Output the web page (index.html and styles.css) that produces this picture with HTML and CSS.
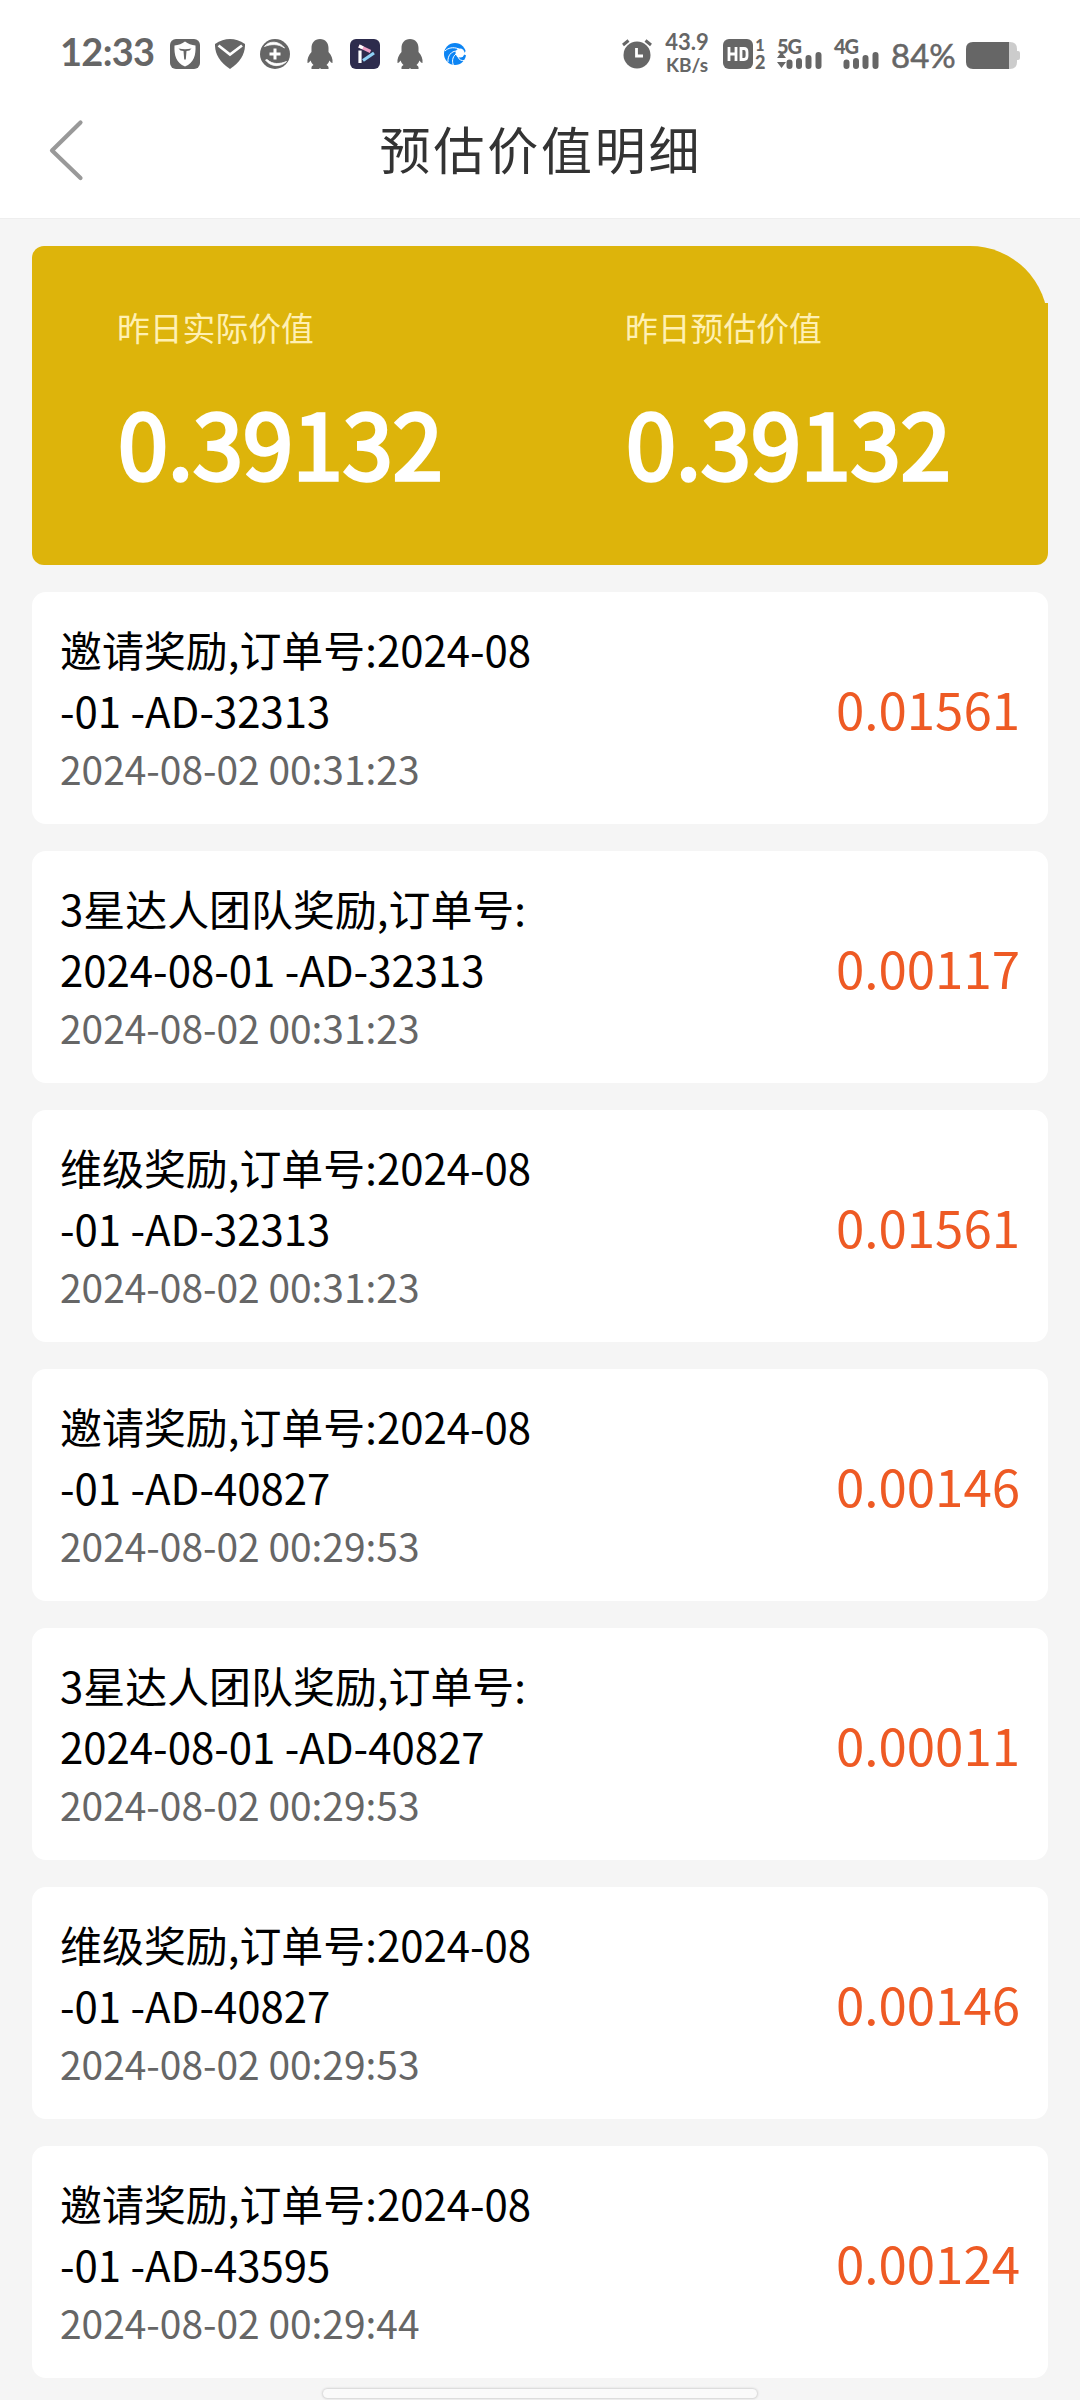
FILE: index.html
```html
<!DOCTYPE html>
<html lang="zh-CN">
<head>
<meta charset="utf-8">
<title>预估价值明细</title>
<link rel="stylesheet" href="styles.css">
</head>
<body>
<header class="top">
  <div class="status">
    <span class="clock">12:33</span>
    <div class="notices">
      <svg width="30" height="30" viewBox="0 0 30 30"><rect width="30" height="30" rx="6" fill="#666"/><path d="M15 2.500C12 5 8.500 6 4.500 6.500C4 16 6 24 15 27.500C24 24 26 16 25.500 6.500C21.500 6 18 5 15 2.500Z" fill="#fff"/><path d="M8.500 9.500Q15 11 21.500 9.500Q20 12 16.500 12L15.800 20.500H14.200L13.500 12Q10 12 8.500 9.500Z" fill="#666"/></svg>
      <svg width="30" height="30" viewBox="0 0 30 30"><path d="M0 5Q15-5 30 5Q30.500 20 15 30Q-.5 20 0 5Z" fill="#666"/><path d="M3.500 6.500L15 15.500L27 6.500" fill="none" stroke="#fff" stroke-width="2.800"/></svg>
      <svg width="30" height="30" viewBox="0 0 30 30"><circle cx="15" cy="15" r="15" fill="#666"/><path d="M4.500 7.500C9 1.500 19 1.500 24.500 9C18 4.500 11 5 4.500 7.500ZM5.500 21C11 28.500 21 28 26.500 22.500C20 25 13 26 7 20.500Z" fill="#fff" stroke="#fff" stroke-width=".8"/><path d="M15 9.500V20.500M9.500 15H20.500" stroke="#fff" stroke-width="3"/></svg>
      <svg width="30" height="30" viewBox="0 0 30 30"><path class="penguin" d="M15 0C9.500 0 6.500 4 6.500 9V13C3.500 16 2 20 2.500 24Q4 24 5.500 21.500Q6.500 24.500 8.500 26Q6 27 6.500 30H14L15 29L16 30H23.500Q24 27 21.500 26Q23.500 24.500 24.500 21.500Q26 24 27.500 24C28 20 26.500 16 23.500 13V9C23.500 4 20.500 0 15 0Z"/></svg>
      <svg width="30" height="30" viewBox="0 0 30 30"><rect width="30" height="30" rx="6" fill="#2d2c4d"/><g fill="none" stroke-width="3.200"><path d="M10 11.500V24" stroke="#fff"/><path d="M9 7L20.500 12.500" stroke="#ee9fc5"/><path d="M9 7L13 8.900" stroke="#fff"/><path d="M13 21.500L24 14" stroke="#8fd2f6"/></g></svg>
      <svg width="30" height="30" viewBox="0 0 30 30"><path class="penguin" d="M15 0C9.500 0 6.500 4 6.500 9V13C3.500 16 2 20 2.500 24Q4 24 5.500 21.500Q6.500 24.500 8.500 26Q6 27 6.500 30H14L15 29L16 30H23.500Q24 27 21.500 26Q23.500 24.500 24.500 21.500Q26 24 27.500 24C28 20 26.500 16 23.500 13V9C23.500 4 20.500 0 15 0Z"/></svg>
      <svg width="30" height="30" viewBox="0 0 30 30"><circle cx="15" cy="15" r="11" fill="#0b84f4"/><circle cx="20" cy="14" r="4.500" fill="#fff"/><path d="M23 15L26.500 11.500V16.500Z" fill="#fff"/><path d="M17 12C11 12 7.500 17 8 23M16 15C12 18 12 23 13.500 26.500M18 18C19 21 22 22 24.500 21.500M19 10C13 7.500 8 9 5 12" fill="none" stroke="#fff" stroke-width="1"/></svg>
    </div>
    <div class="system">
      <svg class="alarm" width="30" height="30" viewBox="0 0 30 30"><circle cx="15" cy="16" r="13.500" fill="#666"/><path d="M1 6L6.500 1.500M23.500 1.500L29 6" stroke="#666" stroke-width="3"/><path d="M14.500 9V17H21" fill="none" stroke="#fff" stroke-width="2.800"/></svg>
      <div class="speed"><span>43.9</span><span class="unit">KB/s</span></div>
      <svg class="hd" width="30" height="30" viewBox="0 0 30 30"><rect width="30" height="30" rx="6" fill="#666"/><path d="M6 8V22M13 8V22M6 15H13M18 9.500V20.500H21Q24 20.500 24 17V13Q24 9.500 21 9.500Z" fill="none" stroke="#fff" stroke-width="2.800"/></svg>
      <div class="sims"><span>1</span><span>2</span></div>
      <div class="net"><span>5G</span><svg width="45" height="17" viewBox="0 0 45 17"><path d="M0 6L4.500 0L9 6ZM0 10H9L4.500 16Z" fill="#666"/><path class="bars" d="M12.500 10.500V14M22 9V14M31.500 6V14M41.500 3V14"/></svg></div>
      <div class="net"><span>4G</span><svg width="45" height="17" viewBox="0 0 45 17"><path class="bars" d="M12.500 10.500V14M22 9V14M31.500 6V14M41.500 3V14"/></svg></div>
      <span class="percent">84%</span>
      <svg class="battery" width="54" height="27" viewBox="0 0 54 27"><path d="M42 0H44Q51 0 51 7V9H52Q54 9 54 11V16Q54 18 52 18H51V20Q51 27 44 27H42Z" fill="#ccc"/><path d="M43 0H7Q0 0 0 7V20Q0 27 7 27H43Z" fill="#666"/></svg>
    </div>
  </div>
  <div class="nav">
    <svg class="back" width="36" height="64" viewBox="0 0 36 64"><path d="M32.500 3.500L4 31.500L32.500 59" fill="none" stroke="#999" stroke-width="4.200" stroke-linecap="round" stroke-linejoin="round"/></svg>
    <h1 class="title">预估价值明细</h1>
  </div>
</header>
<main class="content">
  <section class="summary">
    <div class="stat"><span class="label">昨日实际价值</span><strong class="value">0.39132</strong></div>
    <div class="stat"><span class="label">昨日预估价值</span><strong class="value">0.39132</strong></div>
  </section>
  <article class="card"><div class="info"><p class="desc">邀请奖励,订单号:2024-08<br>-01 -AD-32313</p><time class="date">2024-08-02 00:31:23</time></div><span class="amount">0.01561</span></article>
  <article class="card"><div class="info"><p class="desc">3星达人团队奖励,订单号:<br>2024-08-01 -AD-32313</p><time class="date">2024-08-02 00:31:23</time></div><span class="amount">0.00117</span></article>
  <article class="card"><div class="info"><p class="desc">维级奖励,订单号:2024-08<br>-01 -AD-32313</p><time class="date">2024-08-02 00:31:23</time></div><span class="amount">0.01561</span></article>
  <article class="card"><div class="info"><p class="desc">邀请奖励,订单号:2024-08<br>-01 -AD-40827</p><time class="date">2024-08-02 00:29:53</time></div><span class="amount">0.00146</span></article>
  <article class="card"><div class="info"><p class="desc">3星达人团队奖励,订单号:<br>2024-08-01 -AD-40827</p><time class="date">2024-08-02 00:29:53</time></div><span class="amount">0.00011</span></article>
  <article class="card"><div class="info"><p class="desc">维级奖励,订单号:2024-08<br>-01 -AD-40827</p><time class="date">2024-08-02 00:29:53</time></div><span class="amount">0.00146</span></article>
  <article class="card"><div class="info"><p class="desc">邀请奖励,订单号:2024-08<br>-01 -AD-43595</p><time class="date">2024-08-02 00:29:44</time></div><span class="amount">0.00124</span></article>
</main>
<div class="home-bar"></div>
</body>
</html>
```

FILE: styles.css
```css
* { box-sizing: border-box; }
body {
  margin: 0;
  height: 2400px;
  overflow: hidden;
  background: #f5f5f5;
  font-family: "Noto Sans CJK SC", sans-serif;
  color: #000;
}
svg { display: block; flex: none; }
.top { height: 218px; background: #fff; box-shadow: 0 1px 0 #eee; }
.status {
  display: flex;
  height: 90px;
  padding: 0 60px;
  color: #666;
  font-family: Lato, sans-serif;
  font-weight: 700;
  white-space: nowrap;
}
.clock { width: 110px; padding-top: 28px; font-size: 38px; line-height: 46px; letter-spacing: -.7px; }
.notices { display: flex; gap: 15px; padding-top: 39px; }
.penguin { fill: #666; }
.system { display: flex; align-items: flex-start; margin-left: auto; }
.alarm { margin: 39px -1px 0 1px; }
.speed { display: flex; flex-direction: column; width: 72px; padding-top: 29px; align-items: center; font-size: 22px; line-height: 26px; }
.speed .unit { font-size: 19px; line-height: 20px; }
.hd { margin-top: 39px; }
.sims { display: flex; flex-direction: column; width: 24px; padding: 36px 0 0 2px; font-size: 16px; line-height: 17px; }
.sims span { width: 10px; text-align: center; font-weight: 900; }
.sims span + span { font-size: 18px; line-height: 18px; }
.net { width: 57px; padding-top: 38px; }
.net span { display: block; height: 14px; font-size: 20px; line-height: 16px; font-weight: 900; letter-spacing: -1px; }
.bars { fill: none; stroke: #666; stroke-width: 6; stroke-linecap: round; }
.percent { width: 75px; padding-top: 34px; font-size: 33px; line-height: 42px; font-weight: 400; -webkit-text-stroke: .5px #666; }
.battery { margin-top: 42px; }
.nav { display: grid; grid-template-columns: 150px 1fr 150px; height: 128px; align-items: center; }
.back { margin: -6px 0 0 48px; }
.title { margin: -12px 0 0 2px; text-align: center; font-size: 51px; line-height: 74px; font-weight: 400; letter-spacing: 2.800px; color: #333; }
.content { display: flex; flex-direction: column; gap: 27px; padding: 28px 32px 0; }
.summary {
  position: relative;
  display: grid;
  grid-template-columns: 1fr 1fr;
  height: 319px;
  padding-top: 57px;
  border-radius: 12px 78px 12px 12px;
  background: #ddb40b;
}
.summary::after { content: ""; position: absolute; top: 57px; right: 0; width: 30px; height: 200px; background: #ddb40b; }
.stat { display: flex; flex-direction: column; padding-left: 85px; }
.label { font-size: 32.800px; line-height: 48px; color: #fff0b3; }
.value {
  margin: 25px 0 0 1px;
  font-size: 90px;
  line-height: 130px;
  font-weight: 400;
  color: #fff;
  -webkit-text-stroke: 3.500px #fff;
}
.card {
  display: flex;
  justify-content: space-between;
  align-items: center;
  height: 232px;
  padding: 0 28px;
  border-radius: 14px;
  background: #fff;
}
.info { padding-bottom: 1px; }
.desc { margin: 0; font-size: 41.950px; line-height: 61px; }
.date { display: block; font-size: 38.900px; line-height: 57px; color: #666; }
.amount { font-size: 51px; line-height: 74px; color: #ee5a24; }
.home-bar {
  position: absolute;
  left: 323px;
  top: 2389px;
  width: 434px;
  height: 9px;
  border-radius: 5px;
  background: #fafafa;
  box-shadow: 0 0 2px 1px #d4d4d4;
}
```
